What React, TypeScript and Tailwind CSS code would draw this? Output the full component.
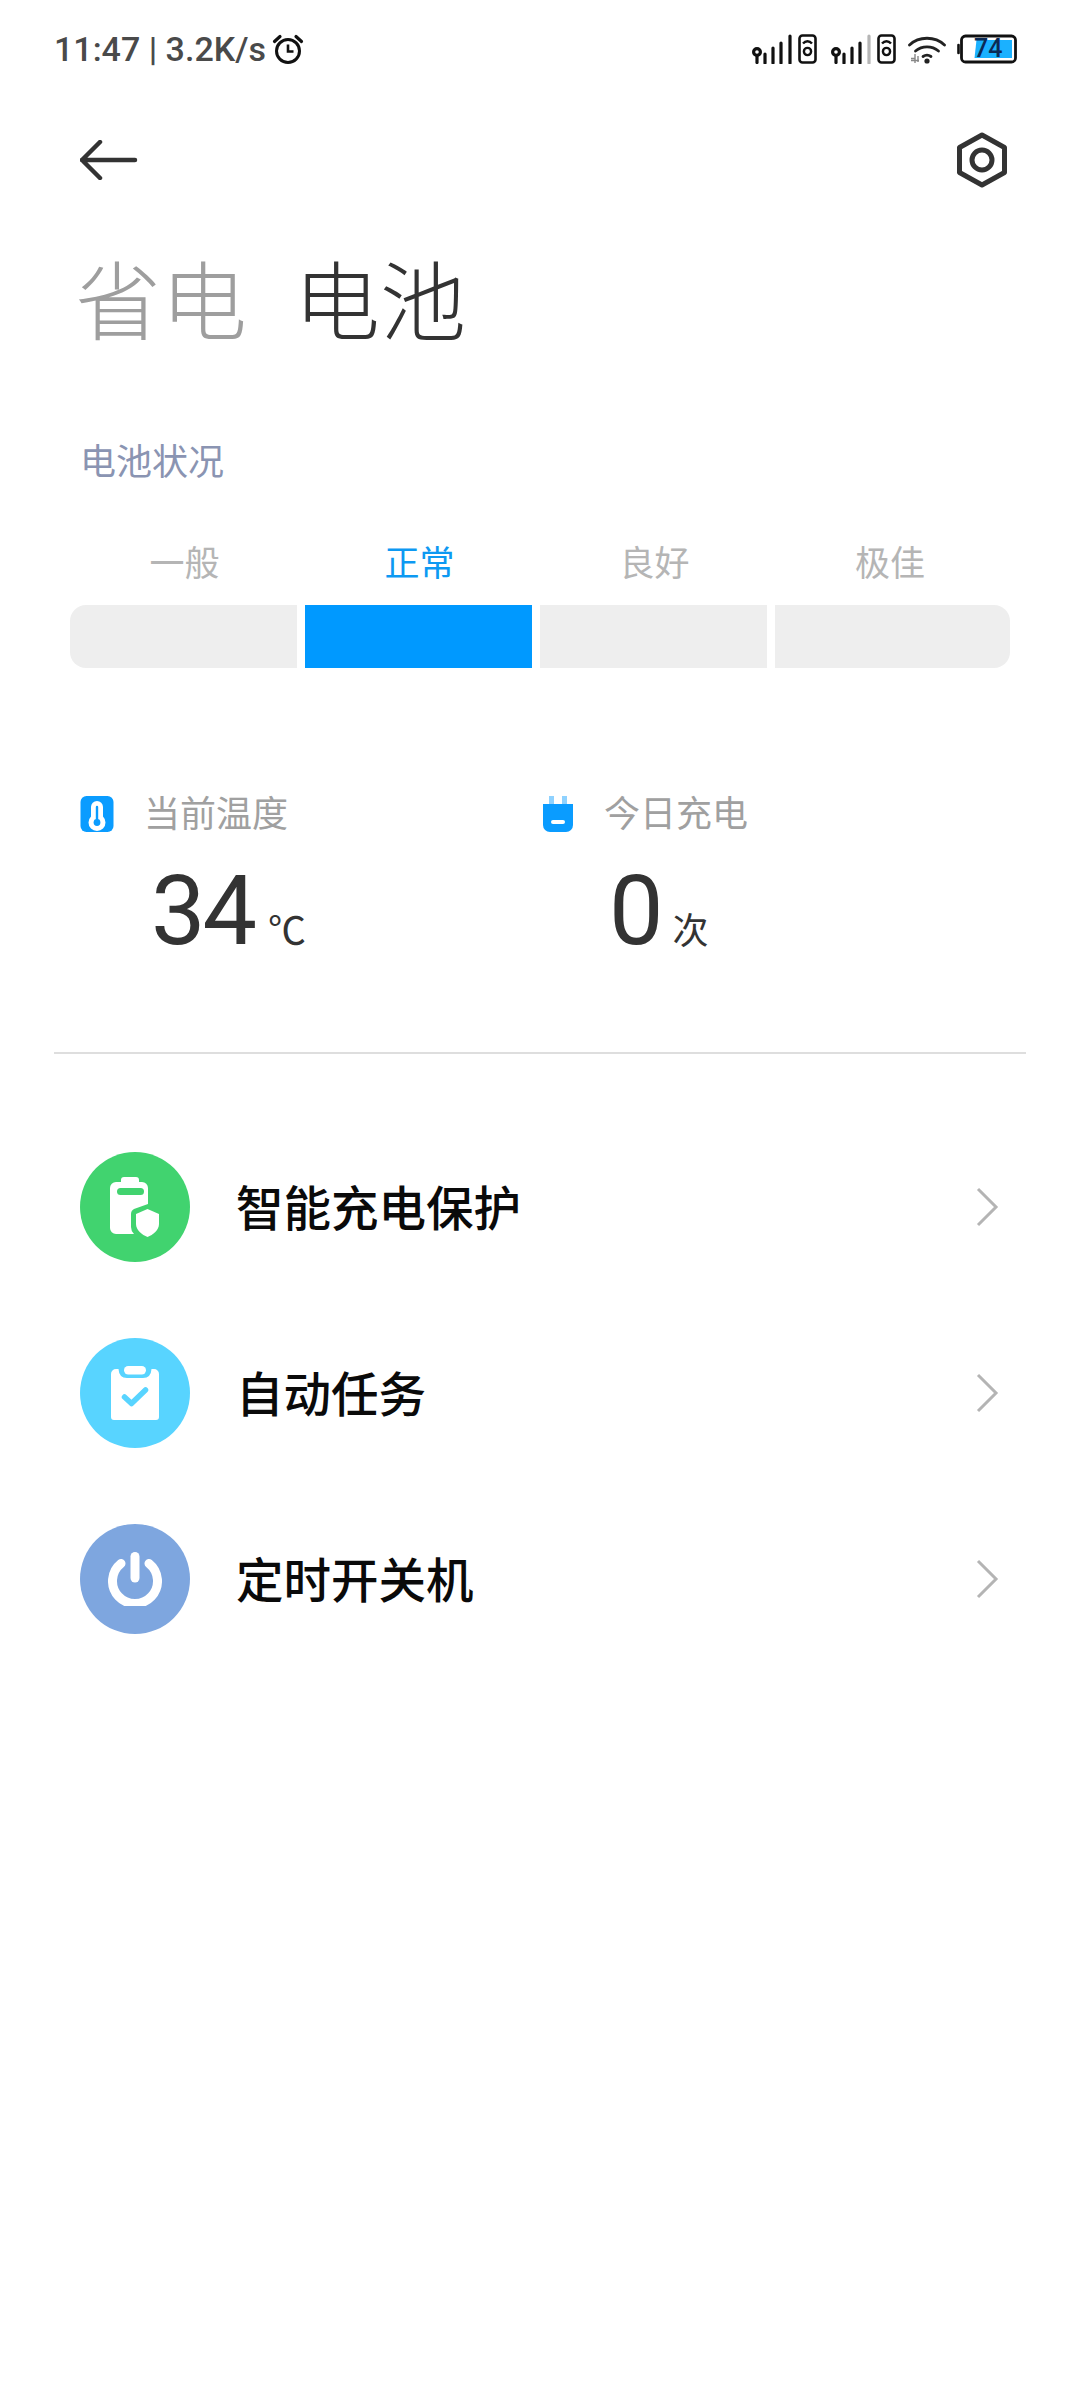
const cjk = "font-['Noto_Sans_CJK_SC','Noto_Sans',sans-serif]";

function Signal({ lastGray }: { lastGray?: boolean }) {
  return (
    <svg width="65" height="30" viewBox="0 0 65 30" fill="none" className="shrink-0">
      <g stroke="#111" strokeWidth="3.2">
        <circle cx="5" cy="18" r="3.4" />
        <path d="M5 21.5V28.5" strokeLinecap="round" />
        <path d="M13 20V29M21 14V29M29 9V29" strokeLinecap="round" />
        <path d="M38 2V29" stroke={lastGray ? "#b5b5b5" : "#111"} strokeLinecap="round" />
        <rect x="47.5" y="1.5" width="16" height="27" rx="3" strokeWidth="2.6" />
        <path d="M51 9.5c2.6-3 6.4-3 9 0" strokeWidth="2.4" />
        <circle cx="55.5" cy="17.5" r="3.6" strokeWidth="2.4" />
      </g>
    </svg>
  );
}

function Wifi() {
  return (
    <svg width="38" height="30" viewBox="0 0 38 30" fill="none" className="shrink-0">
      <g stroke="#222" strokeWidth="2.8" strokeLinecap="round">
        <path d="M1.5 11C11 2 27 2 36.5 11" />
        <path d="M7.5 17C14 11.5 24 11.5 30.500 17" />
        <path d="M15 22.500C17.500 20.800 20.500 20.800 23 22.500" />
      </g>
      <circle cx="19" cy="27" r="2.6" fill="#222" />
      <path d="M3 24.500H7M10 22V28M7 20V29M3 26.500H11" stroke="#888" strokeWidth="1.4" />
    </svg>
  );
}

function Battery() {
  return (
    <div className="relative h-[30px] w-[60px] shrink-0">
      <svg width="60" height="30" viewBox="0 0 60 30" fill="none">
        <path d="M1.500 11V19" stroke="#111" strokeWidth="2.600" strokeLinecap="round" />
        <rect x="4.500" y="2" width="54" height="26" rx="4" stroke="#111" strokeWidth="2.800" />
        <path d="M19.500 6H55V24H17.500Z" fill="#1bb1ff" />
      </svg>
      <span className="absolute left-[17px] top-[1px] font-['Roboto',sans-serif] text-[25px] leading-[28px] font-medium text-[#0b2a55]">
        74
      </span>
    </div>
  );
}

function Alarm() {
  return (
    <svg width="32" height="32" viewBox="0 0 32 32" fill="none" className="shrink-0">
      <circle cx="16" cy="18" r="11.500" stroke="#111" strokeWidth="3" />
      <path d="M16 11.500V18.500H21.500" stroke="#111" strokeWidth="2.600" />
      <path d="M2.500 8.500L8 3.500M29.500 8.500L24 3.500" stroke="#111" strokeWidth="3.200" strokeLinecap="round" />
    </svg>
  );
}

function Thermo() {
  return (
    <svg width="34" height="36" viewBox="0 0 34 36" className="shrink-0">
      <rect x="0.500" y="0" width="33" height="36" rx="6" fill="#0a9cff" />
      <path d="M11 11a6 6 0 0 1 12 0v9.500a8.500 8.500 0 1 1-12 0Z" fill="#fff" />
      <path d="M17 11V24" stroke="#0a9cff" strokeWidth="2.400" strokeLinecap="round" />
      <circle cx="17" cy="26.500" r="3.400" fill="#0a9cff" />
    </svg>
  );
}

function Plug() {
  return (
    <svg width="30" height="36" viewBox="0 0 30 36" className="shrink-0">
      <path d="M6 0h5v9H6zM19 0h5v9h-5z" fill="#8fd2ff" />
      <path d="M0 8h30v21a7 7 0 0 1-7 7H7a7 7 0 0 1-7-7Z" fill="#0a9cff" />
      <rect x="8" y="24" width="14" height="4" rx="2" fill="#fff" />
    </svg>
  );
}

function ShieldBattery() {
  return (
    <svg width="50" height="61" viewBox="0 0 50 61">
      <path
        d="M11 5V3a3 3 0 0 1 3-3h12a3 3 0 0 1 3 3v2h3a6 6 0 0 1 6 6v16L24 32q-3 1.500-3 5v13q0 4 3 7H6a6 6 0 0 1-6-6V11a6 6 0 0 1 6-6Z"
        fill="#fff"
      />
      <rect x="7" y="11" width="27" height="7" rx="3.500" fill="#41d36f" />
      <path d="M37.500 32L49 37V47C49 53 43 58 37.500 60C32 58 26 53 26 47V37Z" fill="#fff" />
    </svg>
  );
}

function Clipboard() {
  return (
    <svg width="48" height="54" viewBox="0 0 48 54">
      <path
        d="M5 3H7.500Q8 12 16 12H32Q40 12 40.500 3H43a5 5 0 0 1 5 5V51a3 3 0 0 1-3 3H3a3 3 0 0 1-3-3V8a5 5 0 0 1 5-5Z"
        fill="#fff"
      />
      <rect x="13" y="0" width="22" height="8.500" rx="4.200" fill="#fff" />
      <path d="M13.500 31L20.500 37.500L34.500 24" fill="none" stroke="#58d4ff" strokeWidth="5.500" strokeLinecap="round" strokeLinejoin="round" />
    </svg>
  );
}

function Power() {
  return (
    <svg width="54" height="54" viewBox="0 0 54 54" fill="none">
      <path d="M13 11.500a22.500 22.500 0 1 0 28 0" stroke="#fff" strokeWidth="9" strokeLinecap="round" />
      <path d="M27 4.500V26" stroke="#fff" strokeWidth="9" strokeLinecap="round" />
    </svg>
  );
}

function Row({ title, bg, children }: { title: string; bg: string; children: React.ReactNode }) {
  return (
    <div className="flex h-[110px] items-center">
      <div className={`flex h-[110px] w-[110px] items-center justify-center rounded-full ${bg}`}>{children}</div>
      <div className={`ml-[46px] flex-1 pb-[3px] ${cjk} text-[47.5px] leading-[60px] font-medium text-[#0a0a0a]`}>{title}</div>
      <svg width="24" height="40" viewBox="0 0 24 40" fill="none" className="mr-[1px]">
        <path d="M3 2L21 20L3 38" stroke="#b4b4b4" strokeWidth="3" />
      </svg>
    </div>
  );
}

export default function App() {
  return (
    <div className={`min-h-[2400px] w-[1080px] bg-white ${cjk}`}>
      <div className="flex h-[98px] items-center justify-between pr-[63px] pl-[54px]">
        <div className="flex items-center gap-[6px]">
          <span className="font-['Roboto',sans-serif] text-[34px] leading-[40px] font-medium whitespace-nowrap text-[#4a4a4a]">
            11:47 | 3.2K/s
          </span>
          <Alarm />
        </div>
        <div className="flex items-center">
          <Signal />
          <div className="w-[14px]" />
          <Signal lastGray />
          <div className="w-[12px]" />
          <Wifi />
          <div className="w-[11px]" />
          <Battery />
        </div>
      </div>

      <div className="flex h-[124px] items-center justify-between pr-[72px] pl-[80px]">
        <svg width="58" height="40" viewBox="0 0 58 40" fill="none">
          <path d="M20 2L2 20L20 38M2 20H55" stroke="#333" strokeWidth="4.500" strokeLinecap="round" strokeLinejoin="round" />
        </svg>
        <svg width="52" height="56" viewBox="0 0 52 56" fill="none">
          <path d="M26 3L48.500 15.500V40.500L26 53L3.500 40.500V15.500Z" stroke="#333" strokeWidth="5" strokeLinejoin="round" />
          <circle cx="26" cy="28" r="10" stroke="#333" strokeWidth="5" />
        </svg>
      </div>

      <div className="mt-[33px] flex pl-[75px] text-[86px] leading-[84px] font-light">
        <span className="text-[#9e9e9e]">省电</span>
        <span className="ml-[47px] text-[#333]">电池</span>
      </div>

      <div className="mt-[102px] pl-[80px] text-[36px] leading-[36px] text-[#8a94b2]">电池状况</div>

      <div className="mt-[66px] flex pl-[67px] text-[35px] leading-[36px] text-[#b5b5b5]">
        <span className="w-[235px] text-center">一般</span>
        <span className="w-[235px] text-center text-[#0d99f2]">正常</span>
        <span className="w-[235px] text-center">良好</span>
        <span className="w-[236px] text-center">极佳</span>
      </div>

      <div className="mt-[26px] flex h-[63px] gap-[8px] pl-[70px]">
        <div className="w-[227px] rounded-l-[16px] bg-[#eeeeee]" />
        <div className="w-[227px] bg-[#0099ff]" />
        <div className="w-[227px] bg-[#eeeeee]" />
        <div className="w-[235px] rounded-r-[16px] bg-[#eeeeee]" />
      </div>

      <div className="mt-[125px] flex">
        <div className="w-[543px] pl-[80px]">
          <div className="flex items-center gap-[30px]">
            <Thermo />
            <span className="pb-[5px] text-[36px] leading-[36px] text-[#a0a0a0]">当前温度</span>
          </div>
          <div className="mt-[27px] flex items-baseline pl-[71px] text-[#333]">
            <span className="font-['Roboto',sans-serif] text-[97px] leading-[100px] tracking-[-3px]">34</span>
            <span className="ml-[14px] text-[38px] leading-[36px]">℃</span>
          </div>
        </div>
        <div>
          <div className="flex items-center gap-[31px]">
            <Plug />
            <span className="pb-[5px] text-[36px] leading-[36px] text-[#a0a0a0]">今日充电</span>
          </div>
          <div className="mt-[27px] flex items-baseline pl-[66px] text-[#333]">
            <span className="font-['Roboto',sans-serif] text-[97px] leading-[100px] tracking-[-3px]">0</span>
            <span className="ml-[12px] pb-[3px] text-[36px] leading-[36px]">次</span>
          </div>
        </div>
      </div>

      <div className="mx-[54px] mt-[91px] h-[2px] bg-[#dedede]" />

      <div className="mt-[98px] flex flex-col gap-[76px] pr-[80px] pl-[80px]">
        <Row title="智能充电保护" bg="bg-[#41d36f]">
          <ShieldBattery />
        </Row>
        <Row title="自动任务" bg="bg-[#58d4ff]">
          <Clipboard />
        </Row>
        <Row title="定时开关机" bg="bg-[#7ea6df]">
          <Power />
        </Row>
      </div>
    </div>
  );
}
